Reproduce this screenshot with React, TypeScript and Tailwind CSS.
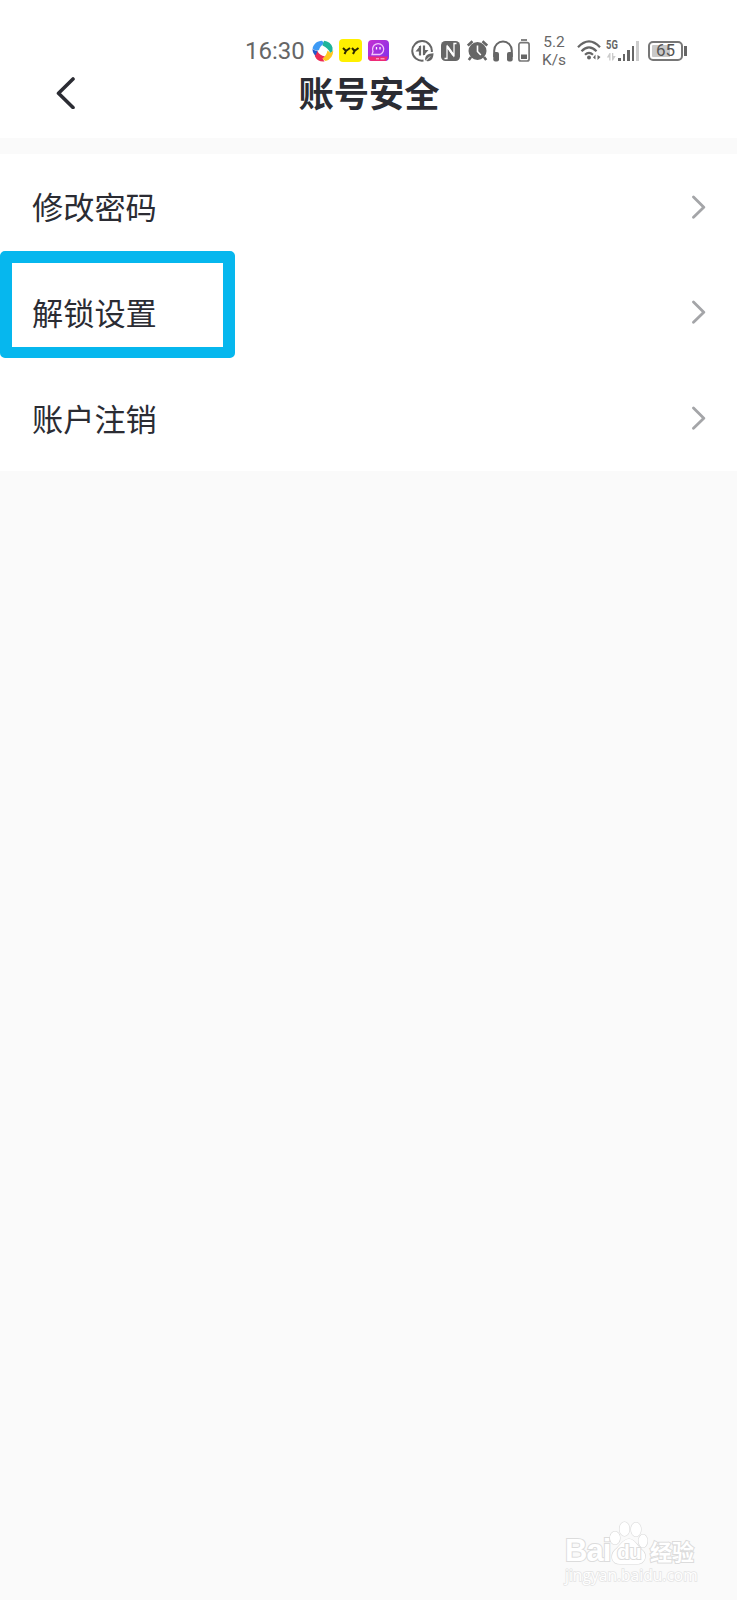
import type { ReactNode } from "react";

const menuItems = [
  { label: "修改密码", highlighted: false },
  { label: "解锁设置", highlighted: true },
  { label: "账户注销", highlighted: false },
];

const SwirlIcon = () => (
  <svg className="ml-[7px] h-[22px] w-[22px] shrink-0" viewBox="0 0 22 22">
    <path d="M.5 8.500C1.500 4 5 .8 10 .7L12.500 3.500Q8 5.500 7 10 3.500 11.500 .5 8.500z" fill="#3d9af5" />
    <path d="M12 .8Q18.500 1.500 20.500 7.500L20.500 11.500 18 13Q16.500 8 10.500 5.500z" fill="#1fb49a" />
    <path d="M21.300 10.500Q21 19 13.500 21L10 18.800Q14.500 16 15.500 10.500L18.500 13z" fill="#ffc81e" />
    <path d="M12.500 21.400Q5.500 22 3 16.500L2.500 13 5 10.500Q7.500 15.500 13 16.500L10.500 18.500z" fill="#ec2a55" />
    <path d="M.5 9Q3 11 5.500 11L3.500 15.500Q.5 13 .5 9z" fill="#2158c9" />
  </svg>
);

const YyIcon = () => (
  <svg className="ml-[5px] h-[23px] w-[23px] shrink-0" viewBox="0 0 23 23" fill="none">
    <rect width="23" height="23" rx="4" fill="#fff000" />
    <path
      d="M4 9 7 12 11 9M7 12 5.500 15M13 9 15.500 12 19.500 9M15.500 12 14 15"
      stroke="#2b2700"
      strokeWidth="2"
    />
  </svg>
);

const GhostIcon = () => (
  <svg className="ml-[6px] h-[21px] w-[21px] shrink-0" viewBox="0 0 21 21" fill="none">
    <defs>
      <linearGradient id="ghost" x1="0" y1="0" x2="1" y2="1">
        <stop offset="0" stopColor="#c62fd0" />
        <stop offset="1" stopColor="#7c32ee" />
      </linearGradient>
    </defs>
    <rect width="21" height="21" rx="4" fill="url(#ghost)" />
    <path d="M0 16.500h20l-2 4.500H4a4 4 0 0 1-4-4z" fill="#ee2b76" />
    <path
      d="M4 14.500H12A5.600 5.600 0 1 0 5 11.500z"
      stroke="#f3c6fb"
      strokeWidth="1.300"
    />
    <path d="M8.500 7v2.500M12 7v2.500" stroke="#fff" strokeWidth="1.300" />
    <path d="M8 18.800h3M12.500 18.800h4" stroke="#ffc3d9" />
  </svg>
);

const DataSaverIcon = () => (
  <svg className="ml-[22px] h-[22px] w-[23px] shrink-0" viewBox="0 0 23 22" fill="none">
    <path d="M20.800 12A9.800 9.800 0 1 0 12.500 20.600" stroke="#666" strokeWidth="2" />
    <path d="M9 6V15.500M13 5.500V15" stroke="#666" strokeWidth="2.200" />
    <path d="M10 5V11.500H4.500zM12.500 15.700V10H17.500z" fill="#666" />
    <path d="M14.200 20.500C13.500 15.500 17 13.500 22.500 13.300 22.500 19 19.500 22 15.500 21z" fill="#666" />
    <path d="M13.500 22 19 16.500" stroke="#fff" strokeWidth="1" />
  </svg>
);

const NfcIcon = () => (
  <svg className="ml-[7px] h-[20px] w-[19px] shrink-0" viewBox="0 0 19 20" fill="none">
    <rect width="19" height="20" rx="4.500" fill="#666" />
    <path d="M3.500 17.500H6V6L12 14.500M15.500 2.500H13V14L7 5.500" stroke="#fff" strokeWidth="1.300" />
    <path d="M6 3.500 13 13.500V16.500L6 6.500z" fill="#fff" />
  </svg>
);

const AlarmIcon = () => (
  <svg className="ml-[7px] h-[21px] w-[21px] shrink-0" viewBox="0 0 21 21" fill="none">
    <circle cx="10.500" cy="11" r="9" fill="#666" />
    <path d="M.8 5.500 5.500 1.200M20.200 5.500 15.500 1.200M4 17 1.800 20M17 17 19.200 20" stroke="#666" strokeWidth="2.600" />
    <path d="M10.500 5.500V11.500L13.800 15" stroke="#fff" strokeWidth="1.600" />
  </svg>
);

const HeadphonesIcon = () => (
  <svg className="ml-[5px] h-[22px] w-[20px] shrink-0" viewBox="0 0 20 22" fill="none">
    <path d="M1.200 17V10.500a8.800 9 0 0 1 17.600 0V17" stroke="#666" strokeWidth="2" />
    <rect x="0.300" y="12" width="5.700" height="9.500" rx="2" fill="#666" />
    <rect x="14" y="12" width="5.700" height="9.500" rx="2" fill="#666" />
  </svg>
);

const DeviceBatteryIcon = () => (
  <svg className="ml-[5px] h-[23px] w-[12px] shrink-0" viewBox="0 0 12 23" fill="none">
    <path d="M3 1H9" stroke="#777" strokeWidth="1.800" />
    <rect x="0.900" y="3.700" width="10.200" height="18.300" rx="2" stroke="#777" strokeWidth="1.700" />
    <rect x="3" y="15.500" width="6" height="4.500" fill="#666" />
  </svg>
);

const WifiIcon = () => (
  <svg className="ml-[11px] h-[22px] w-[25px] shrink-0" viewBox="0 0 25 22" fill="none">
    <path
      d="M1 7.300Q12 -4.500 23 7.300M4.500 11.200Q12 3.500 19.500 11.200M8 14.800Q12 11 16 14.800"
      stroke="#666"
      strokeWidth="2.200"
    />
    <circle cx="12" cy="17.500" r="2" fill="#666" />
    <path d="M18.500 19.500V14.500L16 17.500zM20.500 15V20L23.500 17z" fill="#666" />
  </svg>
);

const SignalIcon = () => (
  <svg className="h-[12px] w-[11px] shrink-0" viewBox="0 0 11 12">
    <path d="M4.500 10.500H3.200V7.500H.8L3.500 3H4.500zM6 3H7.300V6H9.700L7 10.500H6z" fill="#ccc" />
  </svg>
);

const Header = () => (
  <header className="h-[138px] bg-white">
    <div className="flex h-[70px] items-center pt-[31px] pl-[245px] text-[#666]">
      <span className="w-[60px] shrink-0 text-[24px] leading-none whitespace-nowrap">16:30</span>
      <SwirlIcon />
      <YyIcon />
      <GhostIcon />
      <DataSaverIcon />
      <NfcIcon />
      <AlarmIcon />
      <HeadphonesIcon />
      <DeviceBatteryIcon />
      <div className="ml-[12px] w-[24px] shrink-0 text-center text-[15.500px] leading-[18px] whitespace-nowrap">
        <p>5.2</p>
        <p>K/s</p>
      </div>
      <WifiIcon />
      <div className="ml-[4px] flex h-[22px] w-[12px] shrink-0 flex-col justify-between">
        <span className="origin-left scale-x-[0.750] text-[12.500px] leading-[10px] font-bold">5G</span>
        <SignalIcon />
      </div>
      <div className="flex h-[20px] w-[22px] shrink-0 items-end gap-[2px]">
        <i className="h-[3px] w-[2.500px] bg-[#666]" />
        <i className="h-[7px] w-[2.500px] bg-[#666]" />
        <i className="h-[11px] w-[2.500px] bg-[#666]" />
        <i className="h-[15px] w-[2.500px] bg-[#666]" />
        <i className="h-[20px] w-[2.500px] bg-[#ccc]" />
      </div>
      <div className="ml-[8px] flex items-center gap-px">
        <div className="flex h-[20px] w-[35px] items-center justify-center rounded-[5px] border-2 border-[#777] bg-linear-to-r from-[#c9c9c9] from-65% to-white to-65% bg-clip-content p-[2px] text-[17px] leading-none text-[#555]">
          65
        </div>
        <i className="h-[10px] w-[3px] bg-[#666]" />
      </div>
    </div>
    <div className="grid h-[47px] grid-cols-[58px_1fr_58px] items-center">
      <svg className="mb-[2px] ml-[56px] h-[32px] w-[20px]" viewBox="0 0 20 32" fill="none">
        <path d="M17 2 2.500 16.300 17 30.500" stroke="#2b2c33" strokeWidth="3.600" strokeLinecap="round" strokeLinejoin="round" />
      </svg>
      <h1 className="pt-[4px] pl-px text-center text-[35.300px] leading-none font-bold text-[#2b2c33]">账号安全</h1>
    </div>
  </header>
);

const MenuRow = ({ children, highlighted }: { children: ReactNode; highlighted: boolean }) => (
  <li className="relative flex h-[105.670px] items-center justify-between pr-[31px] pl-[32px]">
    <span className="pt-[4px] text-[31.200px] leading-none text-[#2b2c33]">{children}</span>
    <svg className="h-[24px] w-[15px]" viewBox="0 0 15 24" fill="none">
      <path d="M2.500 2 12.800 12.200 2.500 22.200" stroke="#a4a5a8" strokeWidth="2.800" strokeLinecap="round" strokeLinejoin="round" />
    </svg>
    {highlighted && (
      <div className="absolute top-[-9px] left-0 h-[107px] w-[235px] rounded-[5px] border-[12px] border-b-[11px] border-[#06b7ee]" />
    )}
  </li>
);

const Watermark = () => (
  <div className="absolute right-[38px] bottom-[14px] w-[134px] text-white [-webkit-text-stroke:2px_#dcdcdc] [paint-order:stroke_fill]">
    <div className="flex h-[49px] items-end">
      <span className="w-[44px] font-['Liberation_Sans'] text-[31px] leading-[28px] font-bold tracking-[-1px]">
        Bai
      </span>
      <div className="relative h-[44px] w-[39px] shrink-0">
        <svg className="h-[44px] w-[39px]" viewBox="0 0 39 44" fill="#fff" stroke="#dadada" strokeWidth="1.200">
          <ellipse cx="6" cy="17" rx="5" ry="6.500" />
          <ellipse cx="15.500" cy="8" rx="5" ry="7" />
          <ellipse cx="27" cy="8.500" rx="5" ry="7" />
          <ellipse cx="34" cy="20" rx="4.500" ry="6.500" />
          <path d="M20 18c6 0 8 7 13 11 6 5 3 14-5 14H11C2 43 1 34 6 29c5-4 8-11 14-11z" />
        </svg>
        <span className="absolute top-[20px] left-[8px] font-['Liberation_Sans'] text-[21px] leading-none font-bold tracking-[-1px]">
          du
        </span>
      </div>
      <span className="ml-[2px] text-[22px] leading-[25px] font-bold whitespace-nowrap">经验</span>
    </div>
    <p className="-mt-px font-['Open_Sans'] text-[15.600px] leading-[22px] whitespace-nowrap [-webkit-text-stroke:1.500px_#e4e4e4]">
      jingyan.baidu.com
    </p>
  </div>
);

export default function App() {
  return (
    <div className="relative h-[1600px] w-[737px] overflow-hidden bg-[#fafafa] font-[Roboto,'Noto_Sans_CJK_SC',sans-serif]">
      <Header />
      <ul className="mt-[16px] bg-white">
        {menuItems.map((item) => (
          <MenuRow key={item.label} highlighted={item.highlighted}>
            {item.label}
          </MenuRow>
        ))}
      </ul>
      <Watermark />
    </div>
  );
}
